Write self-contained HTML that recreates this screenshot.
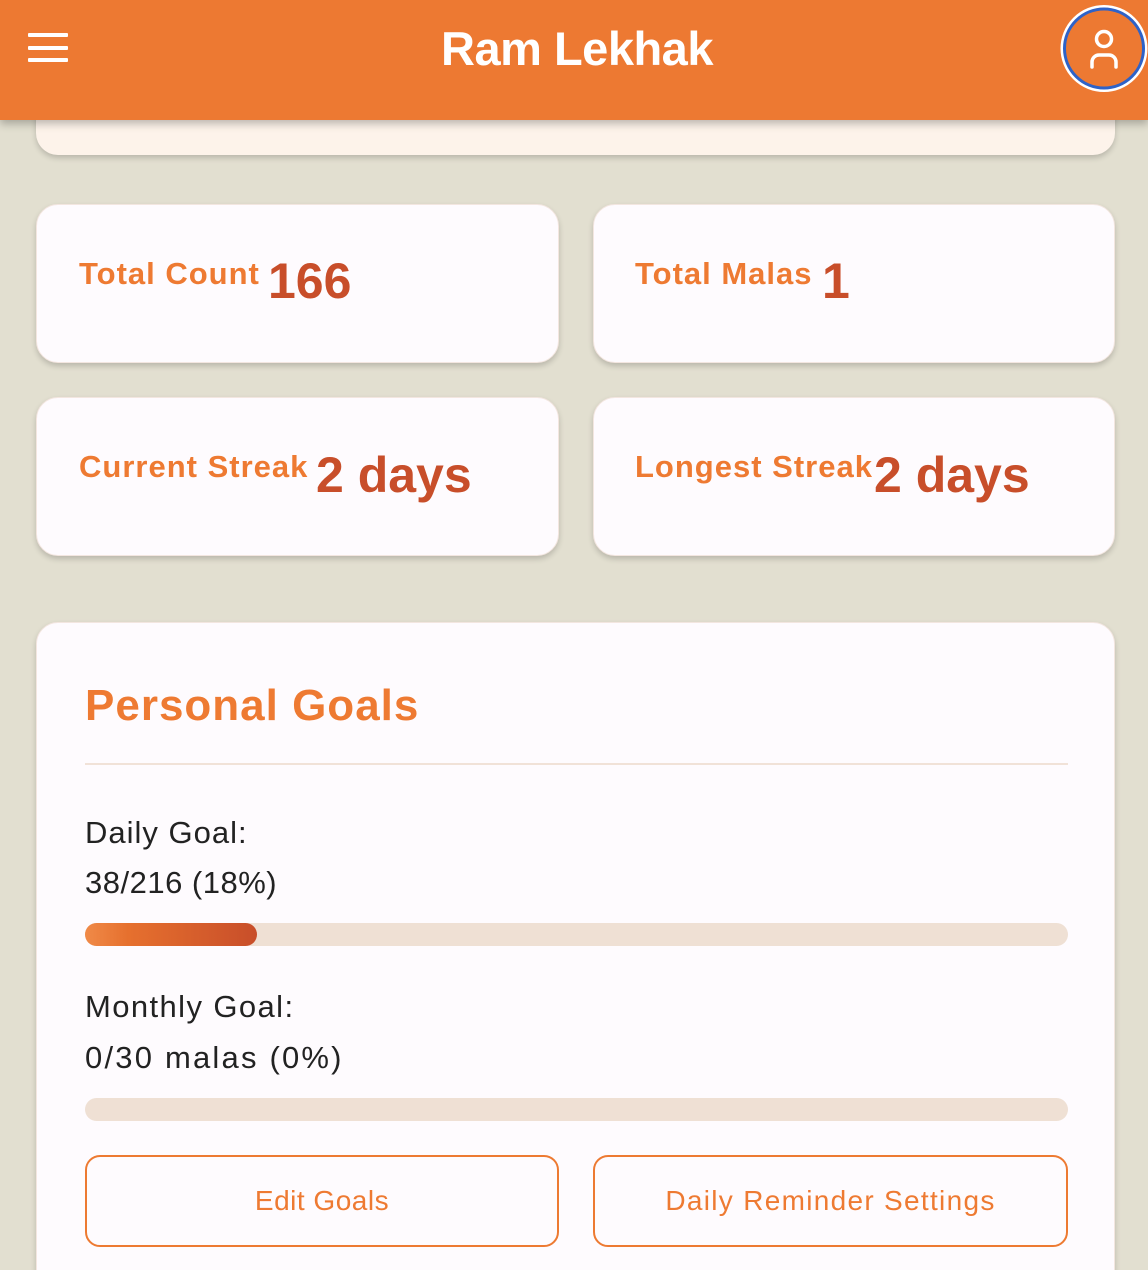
<!DOCTYPE html>
<html><head><meta charset="utf-8"><style>
*{margin:0;padding:0;box-sizing:border-box}
html,body{width:1148px;height:1270px;overflow:hidden}
body{background:#E2DFD0;font-family:"Liberation Sans",sans-serif;position:relative}
.a{position:absolute;white-space:nowrap}
.card{position:absolute;background:#FEFBFE;border-radius:22px;box-shadow:0 3px 6px rgba(0,0,0,.18);border:1px solid #f3e6e0}
.lbl{position:absolute;color:#EE7A32;font-weight:700;font-size:31px;line-height:31px;letter-spacing:1px;white-space:nowrap}
.num{position:absolute;color:#C84E2A;font-weight:700;font-size:50px;line-height:50px;white-space:nowrap}
.txt{position:absolute;color:#222;font-size:31px;line-height:31px;white-space:nowrap;letter-spacing:.5px}
.bar{position:absolute;left:85px;width:983px;height:23px;border-radius:12px;background:#EFE0D4}
.btn{position:absolute;top:1155px;height:92px;border:2px solid #ED7A32;border-radius:15px;color:#EE7A32;font-size:28px;display:flex;align-items:center;justify-content:center;letter-spacing:.5px}
</style></head><body>
<div class="a" style="left:36px;top:90px;width:1079px;height:65px;background:#FDF3EA;border-radius:0 0 22px 22px;box-shadow:0 3px 6px rgba(0,0,0,.18)"></div>
<div class="a" style="left:0;top:0;width:1148px;height:120px;background:#ED7932;box-shadow:0 4px 8px rgba(0,0,0,.25)"></div>
<div class="a" style="left:28px;top:33px;width:40px;height:4px;background:#fff;border-radius:1px"></div>
<div class="a" style="left:28px;top:46px;width:40px;height:4px;background:#fff;border-radius:1px"></div>
<div class="a" style="left:28px;top:58px;width:40px;height:4px;background:#fff;border-radius:1px"></div>
<div class="a" style="left:0;width:1148px;text-align:center;top:25px;font-size:47px;line-height:47px;font-weight:700;color:#fff;letter-spacing:-.5px;padding-left:6px">Ram Lekhak</div>
<svg class="a" style="left:1059px;top:4px" width="89" height="89" viewBox="0 0 89 89">
<circle cx="45" cy="44.5" r="42" fill="none" stroke="#fff" stroke-width="3"/>
<circle cx="45" cy="44.5" r="39.5" fill="none" stroke="#2E62C8" stroke-width="3"/>
<circle cx="45" cy="35" r="7.5" fill="none" stroke="#fff" stroke-width="3.5"/>
<path d="M33 63 V58 A7 7 0 0 1 40 51 H50 A7 7 0 0 1 57 58 V63" fill="none" stroke="#fff" stroke-width="3.5" stroke-linecap="round"/>
</svg>

<div class="card" style="left:36px;top:204px;width:523px;height:159px"></div>
<div class="card" style="left:593px;top:204px;width:522px;height:159px"></div>
<div class="card" style="left:36px;top:397px;width:523px;height:159px"></div>
<div class="card" style="left:593px;top:397px;width:522px;height:159px"></div>
<div class="lbl" style="left:79px;top:258px">Total Count</div>
<div class="num" style="left:268px;top:256px">166</div>
<div class="lbl" style="left:635px;top:258px">Total Malas</div>
<div class="num" style="left:822px;top:256px">1</div>
<div class="lbl" style="left:79px;top:451px">Current Streak</div>
<div class="num" style="left:316px;top:450px">2 days</div>
<div class="lbl" style="left:635px;top:451px">Longest Streak</div>
<div class="num" style="left:874px;top:450px">2 days</div>

<div class="card" style="left:36px;top:622px;width:1079px;height:660px;border-radius:22px 22px 0 0"></div>
<div class="a" style="left:85px;top:684px;font-size:44px;line-height:44px;font-weight:700;color:#EE7A32;letter-spacing:1px">Personal Goals</div>
<div class="a" style="left:85px;top:763px;width:983px;height:2px;background:#F1E2D8"></div>
<div class="txt" style="left:85px;top:817px;letter-spacing:1px">Daily Goal:</div>
<div class="txt" style="left:85px;top:867px">38/216 (18%)</div>
<div class="bar" style="top:923px"></div>
<div class="a" style="left:85px;top:923px;width:172px;height:23px;border-radius:12px;background:linear-gradient(90deg,#F08A48,#E6702E 25%,#C84E2A)"></div>
<div class="txt" style="left:85px;top:991px;letter-spacing:1.4px">Monthly Goal:</div>
<div class="txt" style="left:85px;top:1042px;letter-spacing:2.2px">0/30 malas (0%)</div>
<div class="bar" style="top:1098px"></div>
<div class="btn" style="left:85px;width:474px;background:#FEFBFE">Edit Goals</div>
<div class="btn" style="left:593px;width:475px;background:#FEFBFE;letter-spacing:1.3px">Daily Reminder Settings</div>
</body></html>
